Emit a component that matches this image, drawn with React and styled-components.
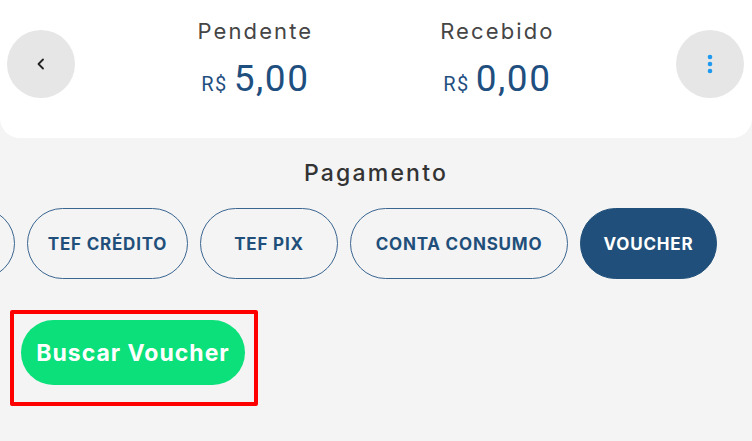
import * as React from "react";
import styled, { createGlobalStyle } from "styled-components";

const GlobalStyle = createGlobalStyle`
  html, body {
    margin: 0;
    padding: 0;
    background: #f4f4f4;
    font-family: "Inter", "Noto Sans", sans-serif;
  }
`;

const Page = styled.div`
  width: 752px;
  height: 441px;
  overflow: hidden;
  background: #f4f4f4;
`;

const Header = styled.header`
  height: 138px;
  background: #ffffff;
  border-radius: 0 0 20px 20px;
  display: flex;
  align-items: flex-start;
  padding: 30px 8px 0 7px;
  box-sizing: border-box;
`;

const RoundButton = styled.button`
  width: 68px;
  height: 68px;
  border-radius: 50%;
  border: none;
  background: #e6e6e6;
  display: flex;
  align-items: center;
  justify-content: center;
  padding: 0;
  flex-shrink: 0;
`;

const Totals = styled.div`
  flex: 1;
  display: flex;
  justify-content: center;
  gap: 127px;
  margin-top: -12px;
  padding-left: 1px;
`;

const Total = styled.div`
  display: flex;
  flex-direction: column;
  align-items: center;
`;

const TotalLabel = styled.span`
  font-size: 22px;
  color: #454545;
  line-height: 26px;
  letter-spacing: 2.1px;
`;

const Amount = styled.div`
  display: flex;
  align-items: baseline;
  gap: 6px;
  color: #1f4f7f;
  margin-top: 15px;
  font-family: "Roboto", sans-serif;
`;

const Currency = styled.span`
  font-size: 20px;
  letter-spacing: 1.5px;
`;

const Value = styled.span`
  font-size: 37px;
  line-height: 40px;
  letter-spacing: 1.5px;
`;

const Section = styled.section`
  display: flex;
  flex-direction: column;
  align-items: center;
  padding-top: 21px;
`;

const SectionTitle = styled.h2`
  margin: 0;
  font-size: 23px;
  font-weight: 500;
  color: #333333;
  line-height: 28px;
  letter-spacing: 2.2px;
`;

const ChipRow = styled.div`
  align-self: stretch;
  display: flex;
  justify-content: flex-end;
  gap: 12px;
  overflow: hidden;
  padding-right: 35px;
  margin-top: 21px;
`;

const Chip = styled.button`
  flex-shrink: 0;
  width: ${(p) => p.$width}px;
  height: 71px;
  padding: 0;
  border-radius: 36px;
  border: 1.5px solid ${(p) => (p.$active ? "#1f4f7a" : "#3a6590")};
  background: ${(p) => (p.$active ? "#1f4f7a" : "transparent")};
  color: ${(p) => (p.$active ? "#ffffff" : "#1f4f7a")};
  font-family: "Inter", sans-serif;
  font-weight: 700;
  font-size: 17px;
  letter-spacing: 0.8px;
`;

const Highlight = styled.div`
  margin: 31px 0 0 10px;
  display: inline-block;
  border: 4px solid #ff0000;
  border-radius: 2px;
  padding: 6px 9px 17px 7px;
`;

const SearchButton = styled.button`
  width: 224px;
  height: 65px;
  border: none;
  border-radius: 33px;
  background: #0be07a;
  color: #ffffff;
  font-family: "Inter", sans-serif;
  font-weight: 700;
  font-size: 23px;
  letter-spacing: 1px;
  padding: 0;
  display: block;
`;

const methods = [
  { label: "TEF DÉBITO", width: 160 },
  { label: "TEF CRÉDITO", width: 161 },
  { label: "TEF PIX", width: 138 },
  { label: "CONTA CONSUMO", width: 218 },
  { label: "VOUCHER", width: 137, active: true },
];

const App = () => {
  return (
    <Page>
      <GlobalStyle />
      <Header>
        <RoundButton aria-label="Voltar">
          <svg width="14" height="14" viewBox="0 0 14 14">
            <path
              d="M9 2.5 L4.5 7 L9 11.5"
              fill="none"
              stroke="#222"
              strokeWidth="1.8"
              strokeLinecap="round"
              strokeLinejoin="round"
            />
          </svg>
        </RoundButton>
        <Totals>
          <Total>
            <TotalLabel>Pendente</TotalLabel>
            <Amount>
              <Currency>R$</Currency>
              <Value>5,00</Value>
            </Amount>
          </Total>
          <Total>
            <TotalLabel>Recebido</TotalLabel>
            <Amount>
              <Currency>R$</Currency>
              <Value>0,00</Value>
            </Amount>
          </Total>
        </Totals>
        <RoundButton aria-label="Mais opções">
          <svg width="6" height="20" viewBox="0 0 6 20">
            <circle cx="3" cy="3" r="2.3" fill="#1e9bf0" />
            <circle cx="3" cy="10" r="2.3" fill="#1e9bf0" />
            <circle cx="3" cy="17" r="2.3" fill="#1e9bf0" />
          </svg>
        </RoundButton>
      </Header>
      <Section>
        <SectionTitle>Pagamento</SectionTitle>
        <ChipRow>
          {methods.map((m) => (
            <Chip key={m.label} $active={m.active} $width={m.width}>
              {m.label}
            </Chip>
          ))}
        </ChipRow>
      </Section>
      <Highlight>
        <SearchButton>Buscar Voucher</SearchButton>
      </Highlight>
    </Page>
  );
};

export default App;
